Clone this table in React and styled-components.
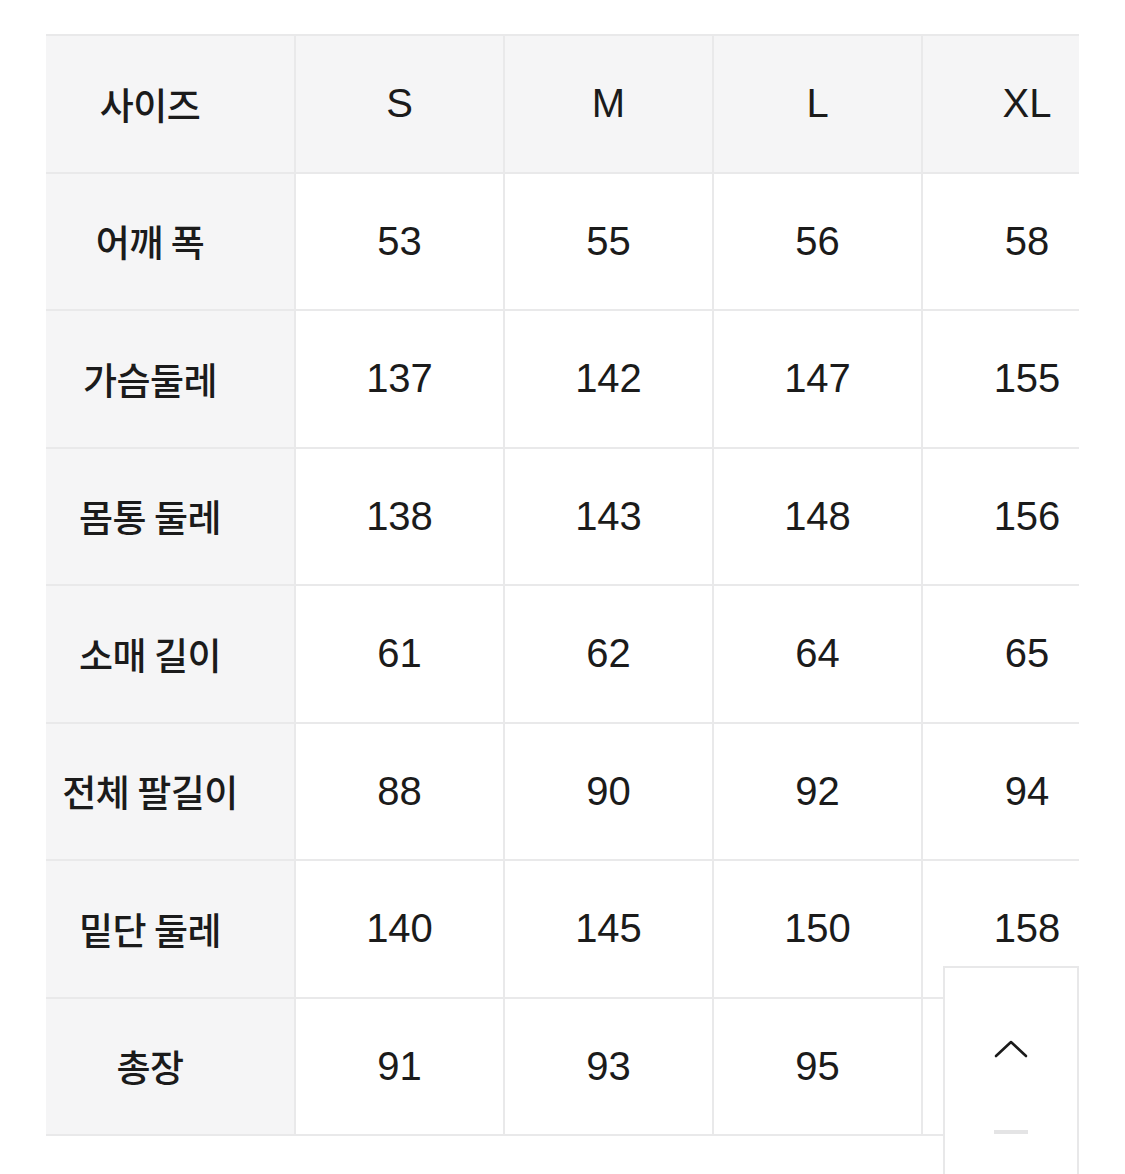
import React from "react";
import styled, { createGlobalStyle } from "styled-components";

const GlobalStyle = createGlobalStyle`
  html, body {
    margin: 0;
    padding: 0;
    background: #ffffff;
  }
  body {
    font-family: "Liberation Sans", "Noto Sans CJK KR", sans-serif;
    color: #1b1b1b;
  }
`;

const sizes = ["S", "M", "L", "XL"];

const rows = [
  { label: "어깨 폭", values: [53, 55, 56, 58] },
  { label: "가슴둘레", values: [137, 142, 147, 155] },
  { label: "몸통 둘레", values: [138, 143, 148, 156] },
  { label: "소매 길이", values: [61, 62, 64, 65] },
  { label: "전체 팔길이", values: [88, 90, 92, 94] },
  { label: "밑단 둘레", values: [140, 145, 150, 158] },
  { label: "총장", values: [91, 93, 95, 97] },
];

export default function App() {
  return (
    <>
      <GlobalStyle />
      <Page>
        <TableWrap>
          <SizeTable>
            <colgroup>
              <Col $w={249} />
              {sizes.map((s) => (
                <Col key={s} $w={209} />
              ))}
            </colgroup>
            <thead>
              <tr>
                <LabelCell as="th">사이즈</LabelCell>
                {sizes.map((s) => (
                  <HeadCell key={s}>{s}</HeadCell>
                ))}
              </tr>
            </thead>
            <tbody>
              {rows.map((row) => (
                <tr key={row.label}>
                  <LabelCell>{row.label}</LabelCell>
                  {row.values.map((v, i) => (
                    <ValueCell key={i}>{v}</ValueCell>
                  ))}
                </tr>
              ))}
            </tbody>
          </SizeTable>
        </TableWrap>
      </Page>
      <TopButton aria-label="맨 위로">
        <svg width="34" height="18" viewBox="0 0 34 18" fill="none">
          <polyline
            points="2,16 17,2 32,16"
            stroke="#1b1b1b"
            strokeWidth="2.6"
            strokeLinecap="round"
            strokeLinejoin="round"
          />
        </svg>
        <Dash />
      </TopButton>
    </>
  );
}

// styling
const Page = styled.div`
  padding: 34px 0 0 46px;
`;

const TableWrap = styled.div`
  width: 1033px;
  overflow: hidden;
`;

const Col = styled.col`
  width: ${(p) => p.$w}px;
`;

const SizeTable = styled.table`
  width: 1085px;
  table-layout: fixed;
  border-collapse: collapse;
  border-top: 2px solid #e9e9ea;
  border-bottom: 2px solid #e9e9ea;

  td,
  th {
    height: 135.5px;
    padding: 0;
    text-align: center;
    vertical-align: middle;
    border-bottom: 2px solid #e9e9ea;
    border-left: 2px solid #e9e9ea;
  }
  td:first-child,
  th:first-child {
    border-left: none;
  }
`;

const HeadCell = styled.th`
  background: #f5f5f6;
  font-family: "Liberation Sans", sans-serif;
  font-size: 40px;
  font-weight: 400;
`;

const LabelCell = styled.td`
  background: #f5f5f6;
  font-family: "Noto Sans CJK KR", sans-serif;
  font-size: 37px;
  font-weight: 500;
  letter-spacing: -0.5px;
  white-space: nowrap;
  && {
    padding-right: 40px;
  }
`;

const ValueCell = styled.td`
  background: #ffffff;
  font-family: "Liberation Sans", sans-serif;
  font-size: 40px;
  font-weight: 400;
`;

const TopButton = styled.button`
  position: fixed;
  left: 943px;
  top: 966px;
  width: 136px;
  height: 240px;
  box-sizing: border-box;
  margin: 0;
  padding: 72px 0 0;
  background: #ffffff;
  border: 2px solid #e8e8e9;
  border-bottom: none;
  display: flex;
  flex-direction: column;
  align-items: center;
  gap: 72px;
  cursor: pointer;
`;

const Dash = styled.span`
  display: block;
  width: 34px;
  height: 4px;
  background: #e4e4e5;
`;
